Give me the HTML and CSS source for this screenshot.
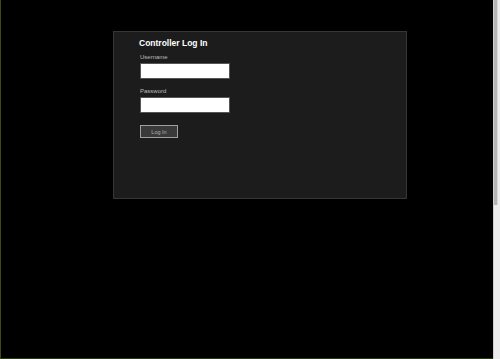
FILE: index.html
```html
<!DOCTYPE html>
<html lang="en">
<head>
    <meta charset="UTF-8">
    <meta name="viewport" content="width=device-width, initial-scale=1.0">
    <title>Controller Log In</title>
    <link rel="stylesheet" href="styles.css">
</head>
<body>
    <div class="page">
        <div class="login-box">
            <h1>Controller Log In</h1>
            <div class="form-group">
                <label for="username">Username</label>
                <input type="text" id="username">
            </div>
            <div class="form-group">
                <label for="password">Password</label>
                <input type="password" id="password">
            </div>
            <button class="btn">Log In</button>
        </div>
    </div>
    <div class="scrollbar"><div class="scrollbar-thumb"></div></div>
</body>
</html>
```

FILE: styles.css
```css
html { background: #000; }
body { font-family: "Liberation Sans", Arial, sans-serif; margin: 0; background: #000; color: #ddd; border-left: 1px solid #3c4a1c; height: 358px; border-bottom: 1px solid #2c3a14; }
.page { padding-top: 31px; padding-left: 112px; }
.login-box { box-sizing: border-box; width: 294px; height: 168px; background: #1c1c1c; border: 1px solid #363636; padding: 6px 0 0 25px; }
.login-box h1 { font-size: 8.5px; font-weight: bold; color: #fff; margin: 0 0 5px 0; line-height: 10px; }
.form-group { margin-bottom: 8px; }
.form-group label { display: block; font-size: 6px; color: #bbb; line-height: 8px; margin: 0 0 2px 1px; }
.form-group input { display: block; width: 90px; height: 16px; margin: 0 0 0 1px; padding: 0; border: 1px solid #555; box-sizing: border-box; background: #fff; }
.btn { display: block; margin: 12px 0 0 1px; width: 38px; height: 13px; padding: 0; background: #3a3a3a; color: #b0b0b0; border: 1px solid #a0a0a0; font-family: "Liberation Sans", Arial, sans-serif; font-size: 5.5px; }
.scrollbar { position: fixed; top: 0; right: 0; width: 7px; height: 359px; background: #ececec; border-left: 1px solid #d0d0d0; box-sizing: border-box; }
.scrollbar-thumb { height: 205px; margin-right: 2px; background: #b4b4b4; border-right: 1px solid #d8d8d8; }
```
